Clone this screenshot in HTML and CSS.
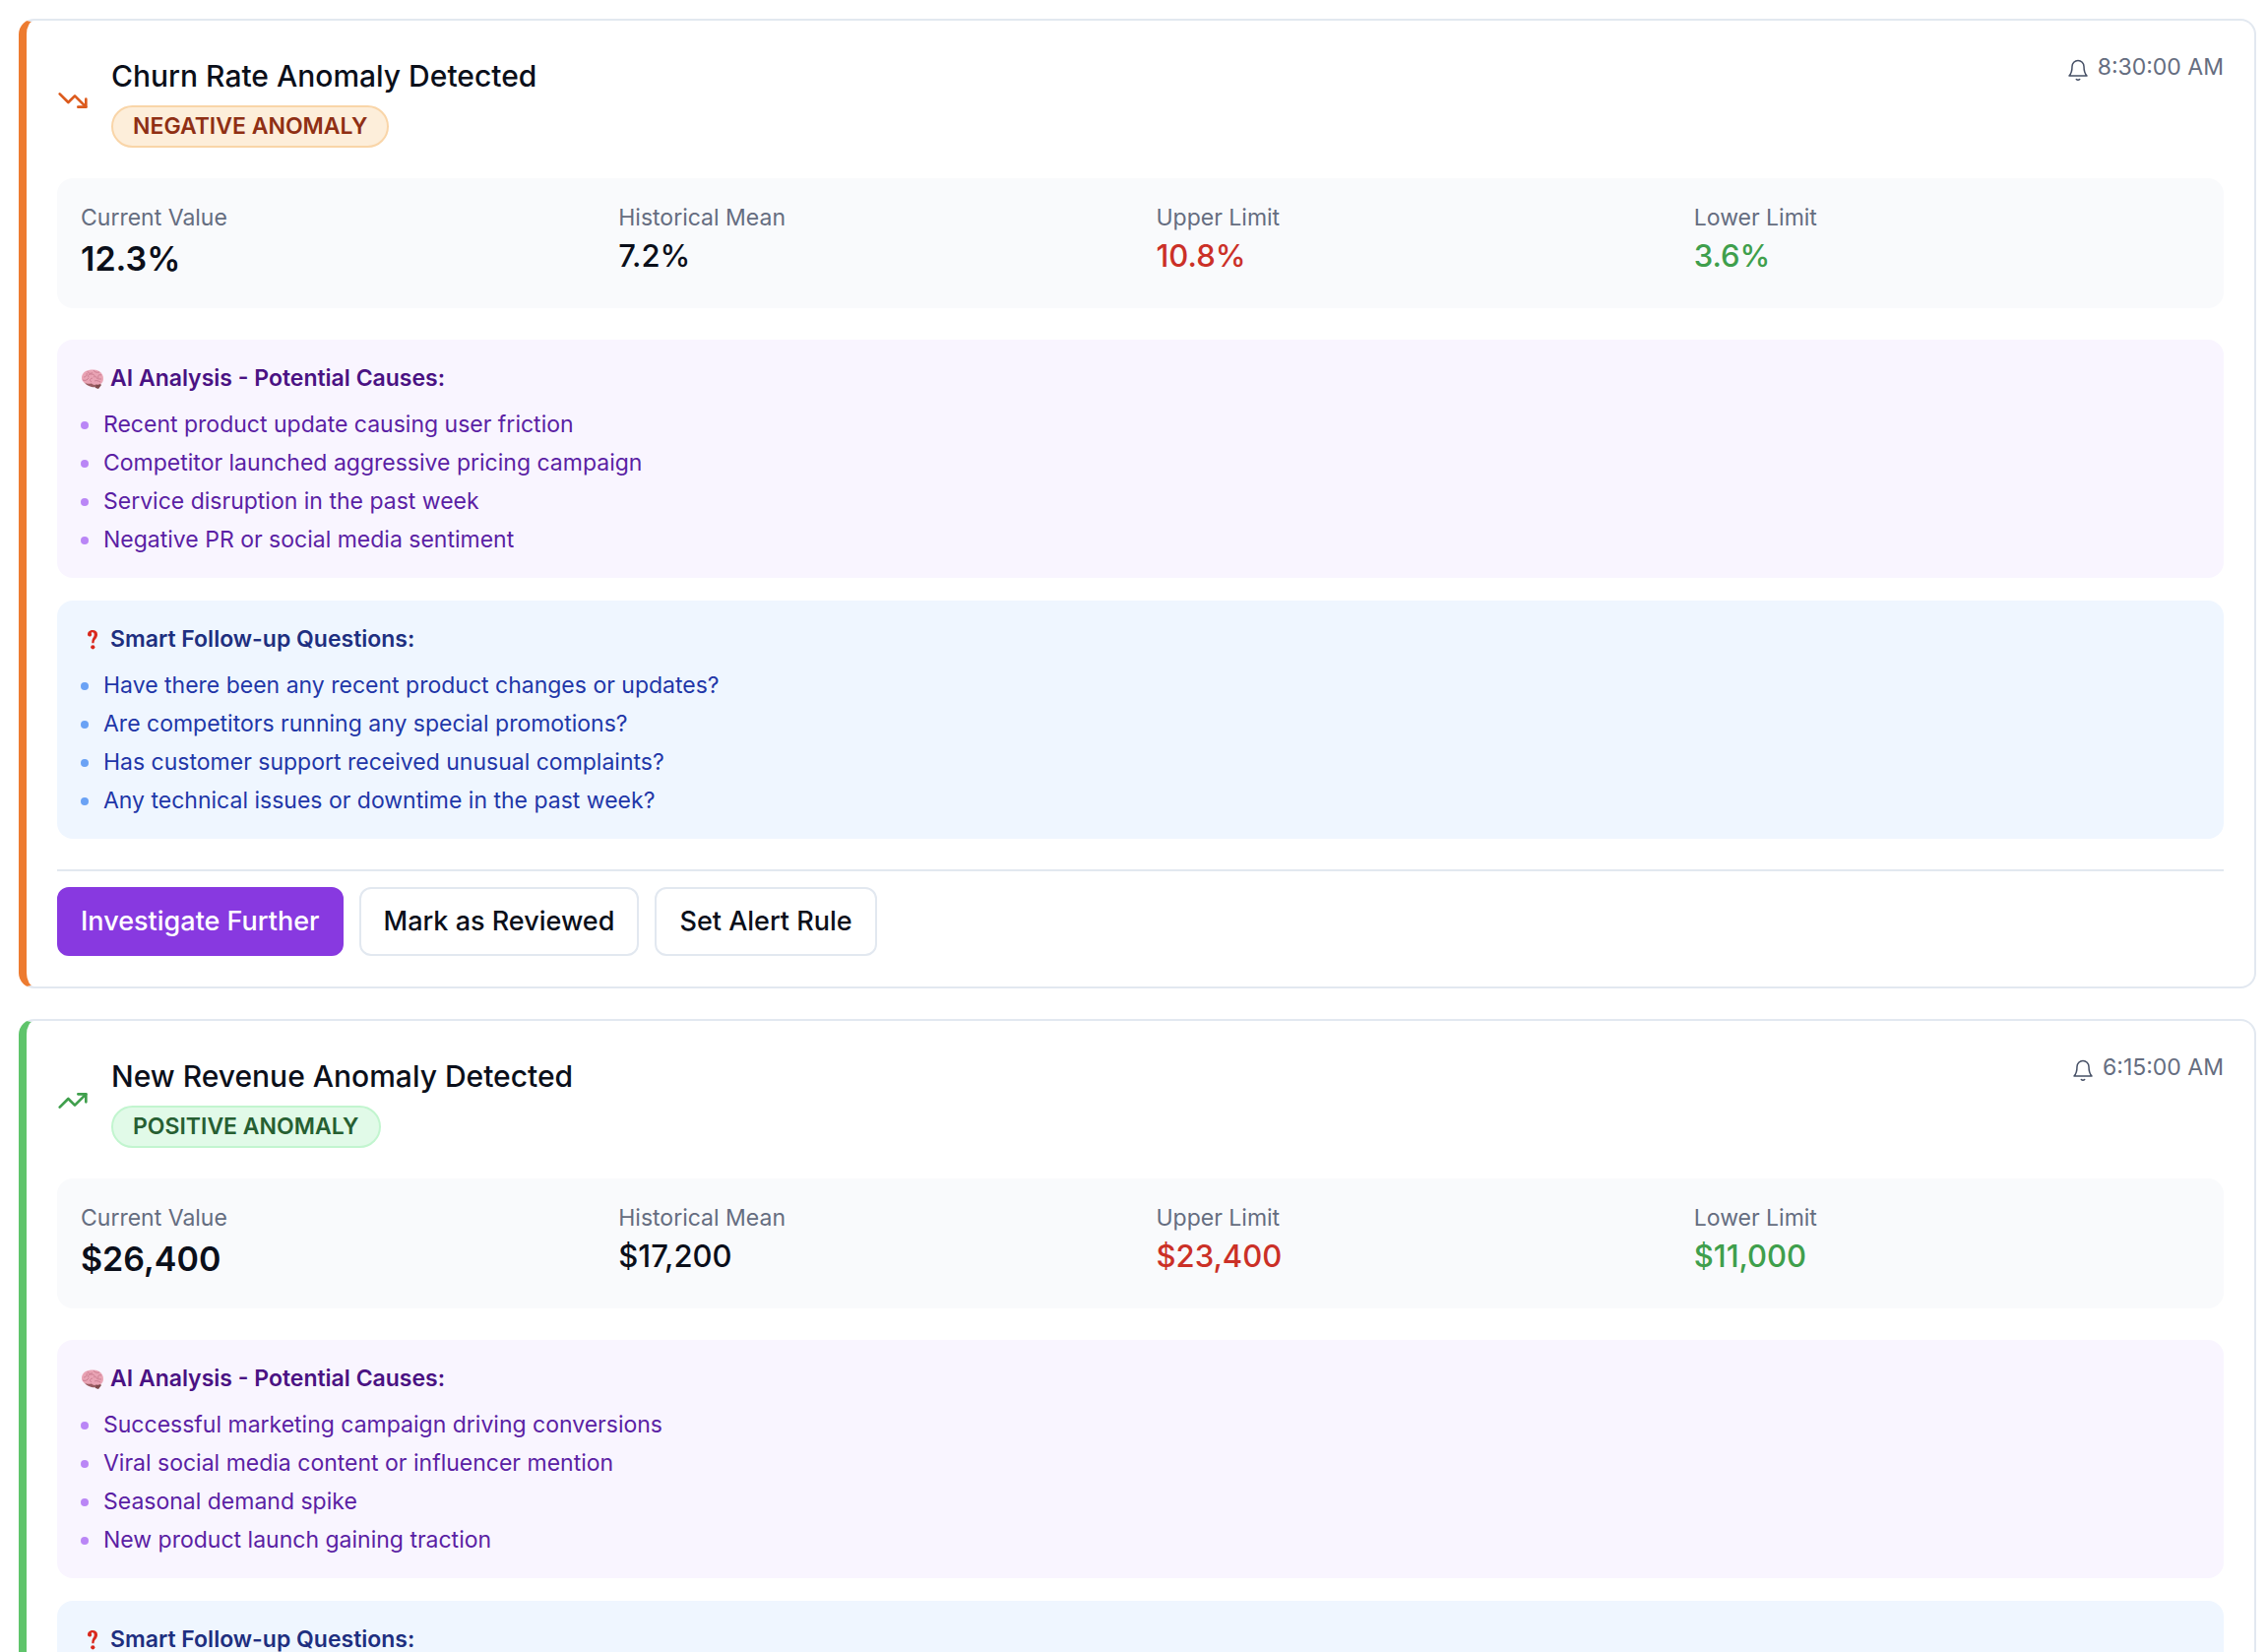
FILE: index.html
```html
<!DOCTYPE html>
<html lang="en">
<head>
<meta charset="utf-8">
<meta name="viewport" content="width=device-width, initial-scale=1">
<title>Anomaly Alerts</title>
<link rel="stylesheet" href="styles.css">
</head>
<body>
<svg class="sprite" aria-hidden="true">
  <symbol id="bell" viewBox="0 0 24 24"><path d="M6 8.500a6 6 0 0 1 12 0c0 6 1 7.500 3 9.500H3c2-2 3-3.500 3-9.500z"/><path d="M10.300 21.500a2.400 2.400 0 0 0 3.400 0"/></symbol>
  <symbol id="trend-down" viewBox="0 0 24 24"><path d="M22 17l-8.500-8.500-5 5L2 7"/><path d="M16 17h6v-6"/></symbol>
  <symbol id="trend-up" viewBox="0 0 24 24"><path d="M22 7l-8.500 8.500-5-5L2 17"/><path d="M16 7h6v6"/></symbol>
  <symbol id="brain" viewBox="0 0 24 24">
    <path d="M13 17l6-1 2 2-3 4-3-1z" fill="#7d4a4c"/>
    <path d="M3 14c1 3 4 5 8 6 2 .500 4 .500 5-1l-3-4z" fill="#9a5d62"/>
    <path d="M1 11C1 7 4 3.500 9 2.800c6-1 11 .700 13 4.700 1.500 3 1.300 6.500-.500 8.500-1.500 1.700-4 2-5.500 1.500-2 .800-4 .300-5-1C7 17.500 1 16 1 11z" fill="#e9a3b4"/>
    <path d="M3 10c2 0 4-2 3-4M7 4c0 2 3 3 5 1.500M13 3c1 2.500 4 2.500 6 2M21 8c-3-1-4 1-3 3M2 13c3 1 5 0 6-2.500M8 10c-1-2 0-3 3-3s4 2 2 3.500M12 11c-3 .500-3 3-1 4M15 9c1 3 3 3 6 3M14 14c2-1 4 0 6 1" fill="none" stroke="#c4768a" stroke-width=".8"/>
  </symbol>
  <symbol id="question" viewBox="0 0 24 24"><path d="M7 6.500C7 3.500 9.500 2 12 2c3 0 5 1.700 5 4.500 0 2.200-1 3.500-2.200 5-.800 1-1.300 2.200-1.300 3.800h-2.200c0-2.600.300-4 1.200-5.500.800-1.300 1.200-2 1.200-3.300S13 4.300 11.800 4.300c-.800 0-1 .400-1 .900 0 .600.300.800.300 1.500 0 1-.800 1.800-2 1.800S7 7.700 7 6.500z" fill="#d9281c"/><circle cx="12.300" cy="19.300" r="2.100" fill="#d9281c"/></symbol>
</svg>
<main class="alerts">
  <article class="card card-negative">
    <header class="card-header">
      <div class="heading">
        <svg class="trend" aria-hidden="true"><use href="#trend-down"/></svg>
        <div class="heading-text">
          <h2 class="title">Churn Rate Anomaly Detected</h2>
          <span class="badge">NEGATIVE ANOMALY</span>
        </div>
      </div>
      <div class="time"><svg class="bell" aria-hidden="true"><use href="#bell"/></svg><time>8:30:00 AM</time></div>
    </header>
    <dl class="metrics">
      <div><dt>Current Value</dt><dd class="current">12.3%</dd></div>
      <div><dt>Historical Mean</dt><dd>7.2%</dd></div>
      <div><dt>Upper Limit</dt><dd class="upper">10.8%</dd></div>
      <div><dt>Lower Limit</dt><dd class="lower">3.6%</dd></div>
    </dl>
    <section class="panel causes">
      <h3 class="panel-title"><svg class="emoji" aria-hidden="true"><use href="#brain"/></svg>AI Analysis - Potential Causes:</h3>
      <ul class="list">
        <li>Recent product update causing user friction</li>
        <li>Competitor launched aggressive pricing campaign</li>
        <li>Service disruption in the past week</li>
        <li>Negative PR or social media sentiment</li>
      </ul>
    </section>
    <section class="panel questions">
      <h3 class="panel-title"><svg class="emoji" aria-hidden="true"><use href="#question"/></svg>Smart Follow-up Questions:</h3>
      <ul class="list">
        <li>Have there been any recent product changes or updates?</li>
        <li>Are competitors running any special promotions?</li>
        <li>Has customer support received unusual complaints?</li>
        <li>Any technical issues or downtime in the past week?</li>
      </ul>
    </section>
    <footer class="actions">
      <button type="button" class="btn btn-primary">Investigate Further</button>
      <button type="button" class="btn">Mark as Reviewed</button>
      <button type="button" class="btn">Set Alert Rule</button>
    </footer>
  </article>
  <article class="card card-positive">
    <header class="card-header">
      <div class="heading">
        <svg class="trend" aria-hidden="true"><use href="#trend-up"/></svg>
        <div class="heading-text">
          <h2 class="title">New Revenue Anomaly Detected</h2>
          <span class="badge">POSITIVE ANOMALY</span>
        </div>
      </div>
      <div class="time"><svg class="bell" aria-hidden="true"><use href="#bell"/></svg><time>6:15:00 AM</time></div>
    </header>
    <dl class="metrics">
      <div><dt>Current Value</dt><dd class="current">$26,400</dd></div>
      <div><dt>Historical Mean</dt><dd>$17,200</dd></div>
      <div><dt>Upper Limit</dt><dd class="upper">$23,400</dd></div>
      <div><dt>Lower Limit</dt><dd class="lower">$11,000</dd></div>
    </dl>
    <section class="panel causes">
      <h3 class="panel-title"><svg class="emoji" aria-hidden="true"><use href="#brain"/></svg>AI Analysis - Potential Causes:</h3>
      <ul class="list">
        <li>Successful marketing campaign driving conversions</li>
        <li>Viral social media content or influencer mention</li>
        <li>Seasonal demand spike</li>
        <li>New product launch gaining traction</li>
      </ul>
    </section>
    <section class="panel questions">
      <h3 class="panel-title"><svg class="emoji" aria-hidden="true"><use href="#question"/></svg>Smart Follow-up Questions:</h3>
    </section>
  </article>
</main>
</body>
</html>
```
FILE: styles.css
```css
* { box-sizing: border-box; margin: 0; padding: 0; }

html { scrollbar-width: none; }

body {
  background: #fff;
  color: #0b0f1a;
  font-family: Inter, "Liberation Sans", sans-serif;
  font-size: 23px;
  line-height: 31px;
}

.sprite { display: none; }

.alerts {
  display: flex;
  flex-direction: column;
  gap: 31px;
  padding: 19px 12px 0 19px;
}

.card {
  --accent: #ed7b30;
  --icon: #dc5a1c;
  --badge-bg: #fdeeda;
  --badge-border: #f9d5a8;
  --badge-text: #8f2f14;
  padding: 32px 31px 31px;
  border: 2px solid #e2e8f0;
  border-left: 8px solid var(--accent);
  border-radius: 16px;
}

.card-positive {
  --accent: #5fc46b;
  --icon: #3f9f4c;
  --badge-bg: #e1fae8;
  --badge-border: #c2f5cf;
  --badge-text: #265f32;
}

.card-header {
  display: flex;
  justify-content: space-between;
  align-items: flex-start;
  margin-bottom: 31px;
}

.heading { display: flex; align-items: center; gap: 23px; }

.heading-text {
  display: flex;
  flex-direction: column;
  align-items: flex-start;
  gap: 6px;
}

.trend, .bell {
  fill: none;
  stroke: var(--icon);
  stroke-width: 2;
  stroke-linecap: round;
  stroke-linejoin: round;
}

.trend { width: 32px; height: 32px; }

.title { font-size: 30px; font-weight: 500; line-height: 48px; }

.badge {
  padding: 4px 20px;
  border: 2px solid var(--badge-border);
  border-radius: 22px;
  background: var(--badge-bg);
  color: var(--badge-text);
  font-weight: 600;
}

.time { display: flex; align-items: flex-end; gap: 8px; color: #656d80; }

.bell {
  width: 24px;
  height: 26px;
  stroke: #465066;
  stroke-width: 1.5;
}

.metrics {
  display: grid;
  grid-template-columns: repeat(4, 1fr);
  gap: 32px;
  margin-bottom: 32px;
  padding: 24px;
  border-radius: 16px;
  background: #f9fafc;
}

.metrics dt { color: #656d80; line-height: 32px; }
.metrics dd { font-size: 31px; font-weight: 500; line-height: 46px; }
.metrics .current { font-size: 34px; font-weight: 600; line-height: 52px; }
.metrics .upper { color: #cb3027; }
.metrics .lower { color: #3f9f4c; }

.panel {
  margin-bottom: 23px;
  padding: 24px 24px 23px;
  border-radius: 16px;
}

.causes { background: #f9f5ff; --strong: #4a1283; --text: #5b1fa4; --dot: #ba86f6; }
.questions { background: #eff6ff; margin-bottom: 31px; --strong: #1e2f80; --text: #1f37a8; --dot: #6aa2f5; }

.panel-title {
  display: flex;
  align-items: center;
  gap: 6px;
  margin-bottom: 16px;
  color: var(--strong);
  font-size: 23px;
  font-weight: 600;
}

.emoji { width: 24px; height: 24px; }

.list {
  display: flex;
  flex-direction: column;
  gap: 8px;
  color: var(--text);
  list-style: none;
}

.list li { display: flex; align-items: center; gap: 15px; }

.list li::before {
  content: "";
  width: 8px;
  height: 8px;
  border-radius: 50%;
  background: var(--dot);
}

.actions {
  display: flex;
  gap: 16px;
  padding-top: 16px;
  border-top: 2px solid #e2e8f0;
}

.btn {
  height: 70px;
  padding: 0 23px;
  border: 2px solid #e2e8f0;
  border-radius: 12px;
  background: #fff;
  color: #0b0f1a;
  font: 500 27px/40px Inter, "Liberation Sans", sans-serif;
}

.btn-primary {
  padding: 0 22px;
  border-color: #8839e0;
  background: #8839e0;
  color: #fff;
}
```
